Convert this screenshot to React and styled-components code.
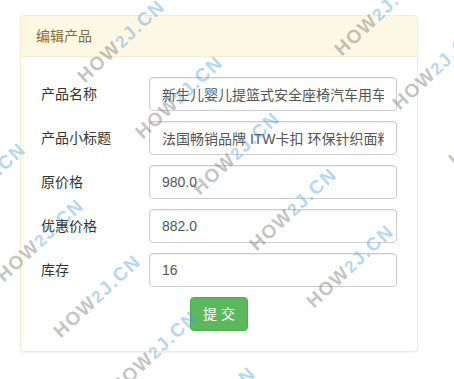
import React from 'react';
import styled, { createGlobalStyle } from 'styled-components';

const GlobalStyle = createGlobalStyle`
  body {
    margin: 0;
    background: #fff;
    font-family: "Liberation Sans", "Noto Sans CJK SC", sans-serif;
    font-size: 14px;
    color: #333;
  }
`;

const Page = styled.div`
  position: relative;
  width: 454px;
  height: 379px;
  overflow: hidden;
  padding: 15px 0 0 20px;
  box-sizing: border-box;
`;

const Panel = styled.div`
  width: 398px;
  box-sizing: border-box;
  border: 1px solid #faebcc;
  border-radius: 4px;
  background: #fff;
  box-shadow: 0 1px 1px rgba(0, 0, 0, 0.05);
`;

const PanelHeading = styled.div`
  padding: 10px 15px;
  line-height: 20px;
  color: #8a6d3b;
  background: #fcf8e3;
  border-bottom: 1px solid #faebcc;
  border-radius: 3px 3px 0 0;
`;

const PanelBody = styled.div`
  padding: 20px;
  display: grid;
  grid-template-columns: 108px 1fr;
  row-gap: 10px;
  align-items: center;
`;

const Label = styled.div`
  line-height: 20px;
`;

const Input = styled.input`
  display: block;
  width: 100%;
  height: 34px;
  box-sizing: border-box;
  padding: 6px 12px;
  font-family: inherit;
  font-size: 14px;
  color: #555;
  background: #fff;
  border: 1px solid #ccc;
  border-radius: 4px;
  box-shadow: inset 0 1px 1px rgba(0, 0, 0, 0.075);
  outline: none;
`;

const Actions = styled.div`
  grid-column: 1 / -1;
  display: flex;
  justify-content: center;
`;

const SubmitButton = styled.button`
  height: 34px;
  padding: 6px 12px;
  font-family: inherit;
  font-size: 14px;
  line-height: 20px;
  color: #fff;
  background: #5cb85c;
  border: 1px solid #4cae4c;
  border-radius: 4px;
  cursor: pointer;
`;

// watermark layer laid over the whole screenshot
const Watermarks = styled.div`
  position: absolute;
  inset: 0;
  pointer-events: none;
`;

const Mark = styled.div`
  position: absolute;
  transform: translate(-50%, -50%) rotate(-43deg);
  font-family: "Liberation Sans", sans-serif;
  font-weight: bold;
  font-size: 19px;
  letter-spacing: 1.5px;
  white-space: nowrap;
  line-height: 1;
`;

const Gray = styled.span`
  color: rgba(110, 110, 110, 0.42);
`;

const Blue = styled.span`
  color: rgba(80, 155, 220, 0.42);
  font-size: ${(p) => (p.$small ? '17px' : '19px')};
`;

const marks = [
  [121, 41], [179, 97], [236, 153], [293, 209], [350, 266],
  [378, 14], [436, 68], [492, 124],
  [-18, 184], [40, 240], [97, 296], [154, 352], [212, 408],
];

const fields = [
  { label: '产品名称', value: '新生儿婴儿提篮式安全座椅汽车用车载便携宝宝摇篮' },
  { label: '产品小标题', value: '法国畅销品牌 ITW卡扣 环保针织面料 舒适透气' },
  { label: '原价格', value: '980.0' },
  { label: '优惠价格', value: '882.0' },
  { label: '库存', value: '16' },
];

const App = () => (
  <Page>
    <GlobalStyle />
    <Panel>
      <PanelHeading>编辑产品</PanelHeading>
      <PanelBody>
        {fields.map((f) => (
          <React.Fragment key={f.label}>
            <Label>{f.label}</Label>
            <Input type="text" defaultValue={f.value} />
          </React.Fragment>
        ))}
        <Actions>
          <SubmitButton type="submit">提 交</SubmitButton>
        </Actions>
      </PanelBody>
    </Panel>
    <Watermarks>
      {marks.map(([x, y]) => (
        <Mark key={`${x}-${y}`} style={{ left: x, top: y }}>
          <Gray>HOW</Gray>
          <Blue $small>2</Blue>
          <Blue>J.CN</Blue>
        </Mark>
      ))}
    </Watermarks>
  </Page>
);

export default App;
